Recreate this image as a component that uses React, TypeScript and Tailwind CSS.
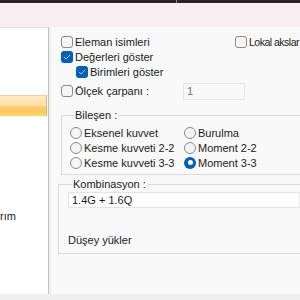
import type { ReactNode } from 'react'

function Check({ checked = false }: { checked?: boolean }): JSX.Element {
  if (checked) {
    return (
      <span className="flex h-[12px] w-[12px] shrink-0 items-center justify-center rounded-[3px] bg-[#005fb8]">
        <svg viewBox="0 0 12 12" className="h-[10px] w-[10px]" fill="none">
          <path d="M2.6 6.2 4.9 8.4 9.4 3.8" stroke="#cfe3f7" strokeWidth="1" strokeLinecap="round" strokeLinejoin="round" />
        </svg>
      </span>
    )
  }
  return <span className="h-[12px] w-[12px] shrink-0 rounded-[3px] border border-[#8a8a8a] bg-[#f5f5f5]" />
}

function Radio({ on = false }: { on?: boolean }): JSX.Element {
  if (on) {
    return (
      <span className="flex h-[12px] w-[12px] shrink-0 items-center justify-center rounded-full bg-[#005fb8]">
        <span className="h-[5px] w-[5px] rounded-full bg-white" />
      </span>
    )
  }
  return <span className="h-[12px] w-[12px] shrink-0 rounded-full border border-[#8a8a8a] bg-[#f5f5f5]" />
}

function CheckRow({
  label,
  checked,
  className = '',
  textClass = ''
}: {
  label: string
  checked?: boolean
  className?: string
  textClass?: string
}): JSX.Element {
  return (
    <div className={`flex h-[15px] shrink-0 items-center gap-[2px] whitespace-nowrap ${className}`}>
      <Check checked={checked} />
      <span className={`leading-[14px] ${textClass}`}>{label}</span>
    </div>
  )
}

function RadioRow({ label, on }: { label: string; on?: boolean }): JSX.Element {
  return (
    <div className="flex h-[15px] items-center gap-[2px] whitespace-nowrap">
      <Radio on={on} />
      <span className="leading-[14px]">{label}</span>
    </div>
  )
}

function Group({ title, className = '', children }: { title: string; className?: string; children: ReactNode }): JSX.Element {
  return (
    <fieldset className={`border border-r-0 border-[#dcdcdc] ${className}`}>
      <legend className="ml-[4px] px-[1px] leading-[14px]">{title}</legend>
      {children}
    </fieldset>
  )
}

export default function App(): JSX.Element {
  return (
    <div className="flex h-[300px] w-[300px] flex-col overflow-hidden bg-[#f9f9f9] font-['Liberation_Sans',Arial,sans-serif] text-[11px] text-[#1b1b1b]">
      <div className="flex h-[3px] bg-[#262626]">
        <div className="w-[176px]" />
        <div className="w-[1px] bg-[#8a8a8a]" />
      </div>
      <div className="h-[24px] bg-[#f9eef2]" />

      <div className="flex min-h-0 flex-1">
        <div className="flex w-[49px] shrink-0 flex-col border-t border-r border-t-[#e2e2e2] border-r-[#c6c6c6] bg-white">
          <div className="mt-[67px] h-[21px] w-[47px] border-t border-r border-t-[#e8cfa5] border-r-[#dcb270] bg-[linear-gradient(to_bottom,#fee9c1_0%,#fee0a8_45%,#fccb69_58%,#fcc95f_80%,#fdd872_100%)]" />
          <div className="mt-[93px] leading-[14px]">rım</div>
        </div>
        <div className="w-[2px] shrink-0 bg-[#eeeeee]" />

        <div className="min-w-0 flex-1 overflow-hidden pl-[10px] pt-[7px]">
          <div className="flex">
            <CheckRow label="Eleman isimleri" className="w-[174px]" />
            <CheckRow label="Lokal akslar" textClass="text-[10.5px] tracking-[-0.5px]" />
          </div>
          <CheckRow label="Değerleri göster" checked />
          <CheckRow label="Birimleri göster" checked className="ml-[15px]" />
          <div className="mt-[3px] flex h-[18px] items-center">
            <CheckRow label="Ölçek çarpanı :" className="w-[122px]" />
            <div className="flex h-[17px] w-[62px] items-center border border-[#e6e6e6] bg-[#f9f9f9] pl-[3px] text-[#707070]">1</div>
          </div>

          <Group title="Bileşen :" className="mt-[8px] pb-[4px] pl-[8px] pt-[3px]">
            <div className="flex">
              <div className="w-[114px]">
                <RadioRow label="Eksenel kuvvet" />
                <RadioRow label="Kesme kuvveti 2-2" />
                <RadioRow label="Kesme kuvveti 3-3" />
              </div>
              <div>
                <RadioRow label="Burulma" />
                <RadioRow label="Moment 2-2" />
                <RadioRow label="Moment 3-3" on />
              </div>
            </div>
          </Group>

          <Group title="Kombinasyon :" className="-ml-[3px] mt-[2px] pb-[6px] pl-[9px]">
            <div className="mt-[1px] flex h-[16px] items-center border border-[#e4e4e4] bg-white pl-[3px]">1.4G + 1.6Q</div>
            <div className="mt-[25px] leading-[14px]">Düşey yükler</div>
          </Group>
        </div>
      </div>
      <div className="h-[6px] bg-[#f0f0f0]" />
    </div>
  )
}
